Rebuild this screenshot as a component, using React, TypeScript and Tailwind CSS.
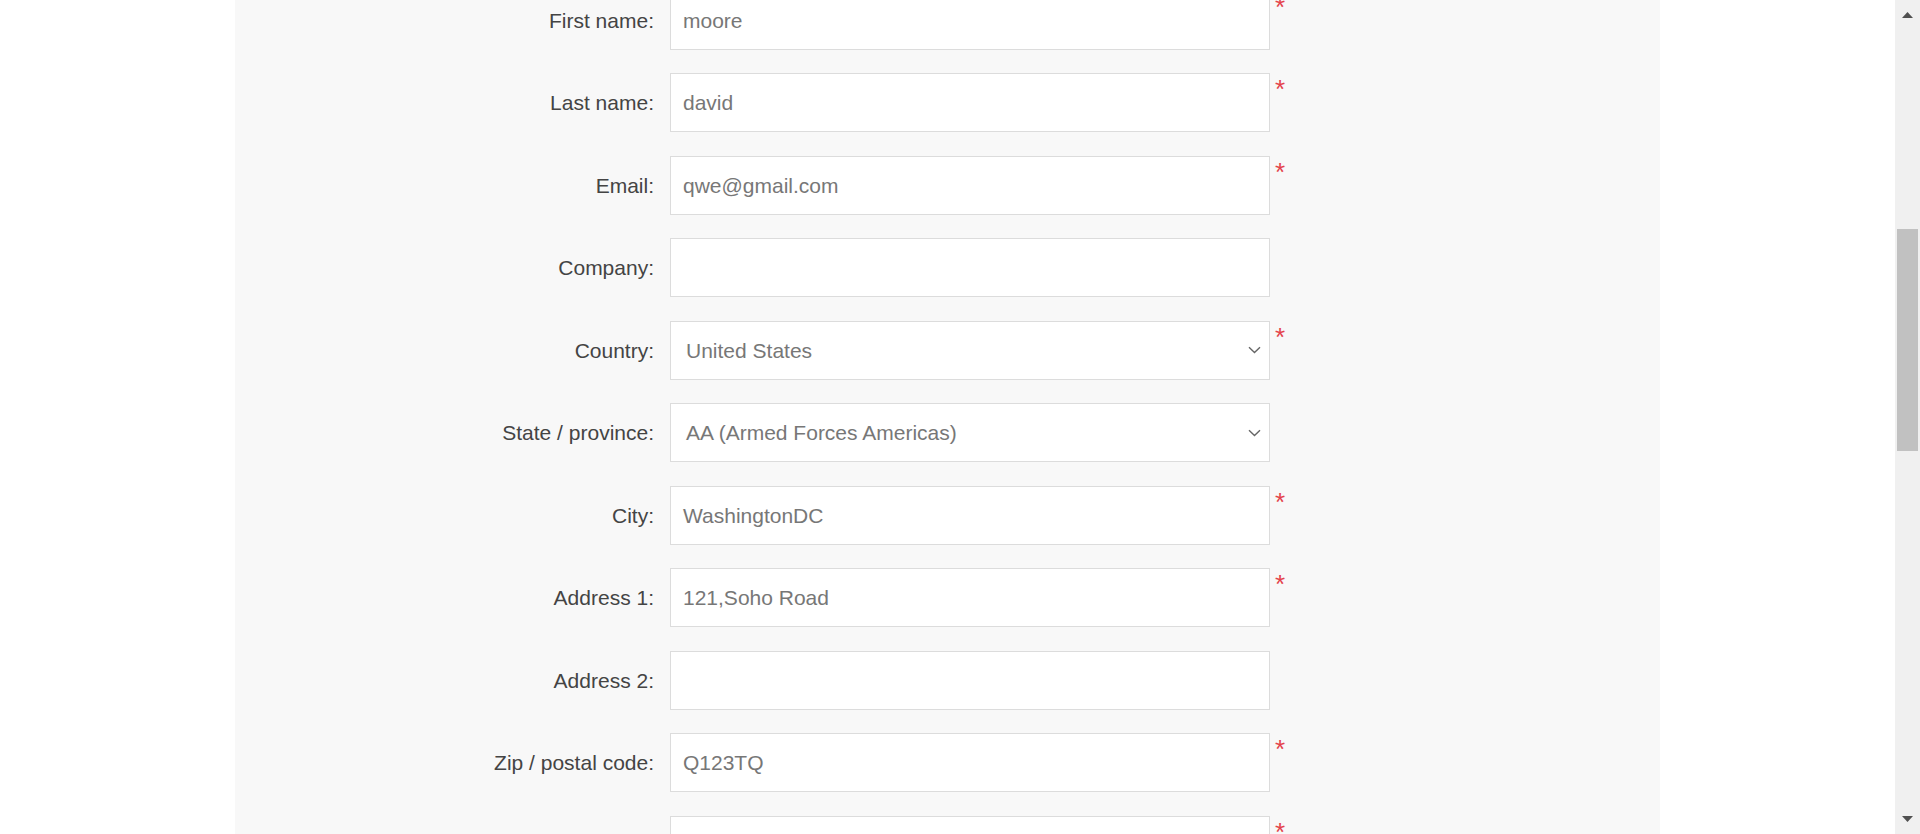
import React from "react";

type Field = { label: string; value: string; required: boolean; select?: boolean };

const fields: Field[] = [
  { label: "First name:", value: "moore", required: true },
  { label: "Last name:", value: "david", required: true },
  { label: "Email:", value: "qwe@gmail.com", required: true },
  { label: "Company:", value: "", required: false },
  { label: "Country:", value: "United States", required: true, select: true },
  { label: "State / province:", value: "AA (Armed Forces Americas)", required: false, select: true },
  { label: "City:", value: "WashingtonDC", required: true },
  { label: "Address 1:", value: "121,Soho Road", required: true },
  { label: "Address 2:", value: "", required: false },
  { label: "Zip / postal code:", value: "Q123TQ", required: true },
  { label: "Phone number:", value: "", required: true },
];

function Chevron() {
  return (
    <svg width="13" height="8" viewBox="0 0 13 8" className="shrink-0">
      <path d="M1 1.2 L6.5 6.5 L12 1.2" fill="none" stroke="#666" strokeWidth="1.4" />
    </svg>
  );
}

function Row({ f }: { f: Field }) {
  return (
    <div className="flex items-start h-[59px]">
      <div className="w-[419px] h-[59px] flex items-center justify-end text-[21px] text-[#444] leading-none">
        {f.label}
      </div>
      <div className="ml-[16px] w-[600px] h-[59px] border border-[#dcdcdc] bg-white flex items-center text-[21px] text-[#777] leading-none">
        {f.select ? (
          <div className="flex w-full items-center pl-[15px] pr-[8px]">
            <span className="flex-1">{f.value}</span>
            <Chevron />
          </div>
        ) : (
          <span className="pl-[12px]">{f.value}</span>
        )}
      </div>
      {f.required && (
        <span className="ml-[5px] mt-[3px] text-[26px] leading-none text-[#e4434b]">*</span>
      )}
    </div>
  );
}

export default function App() {
  return (
    <div
      className="flex w-[1920px] h-[834px] overflow-hidden bg-white"
      style={{ fontFamily: '"Liberation Sans", Arial, sans-serif' }}
    >
      <div className="flex-1 flex justify-center">
        <div className="w-[1425px] h-[834px] bg-[#f8f8f8] overflow-hidden">
          <div className="flex flex-col gap-[23.5px] mt-[-9.5px]">
            {fields.map((f) => (
              <Row key={f.label} f={f} />
            ))}
          </div>
        </div>
      </div>
      <div className="w-[25px] h-[834px] bg-[#f0f0f0] flex flex-col items-center">
        <div className="h-[30px] flex items-center justify-center">
          <svg width="11" height="6" viewBox="0 0 11 6">
            <path d="M0 6 L5.5 0 L11 6 Z" fill="#505050" />
          </svg>
        </div>
        <div className="mt-[199px] w-[21px] h-[222px] bg-[#c1c1c1]" />
        <div className="flex-1" />
        <div className="h-[30px] flex items-center justify-center">
          <svg width="11" height="6" viewBox="0 0 11 6">
            <path d="M0 0 L5.5 6 L11 0 Z" fill="#505050" />
          </svg>
        </div>
      </div>
    </div>
  );
}
